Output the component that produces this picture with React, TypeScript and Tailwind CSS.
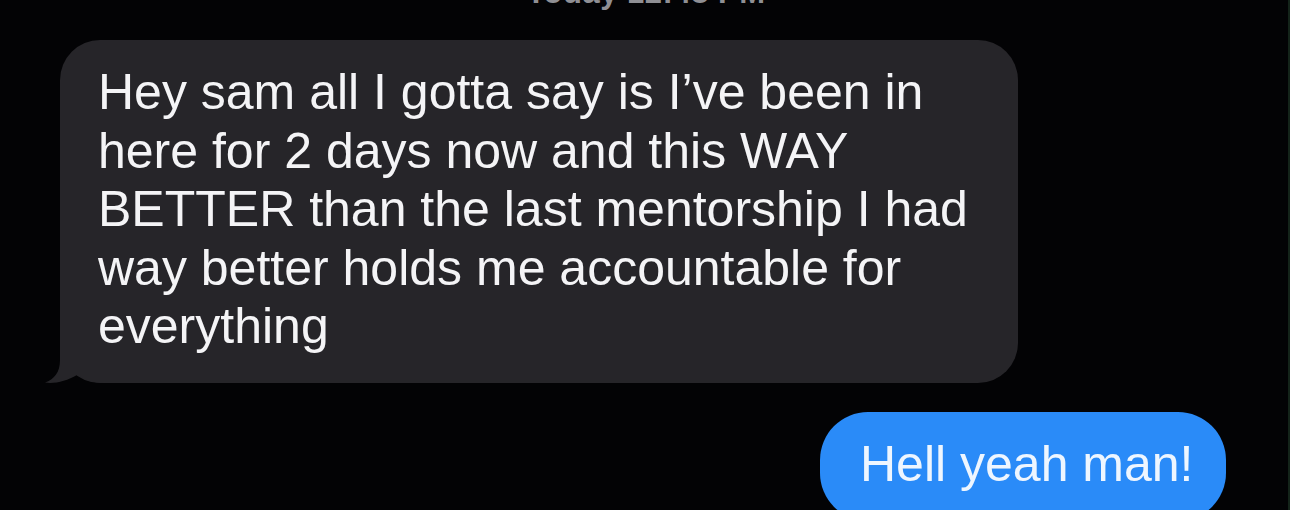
import React from "react";

export default function App() {
  const lines = [
    "Hey sam all I gotta say is I\u2019ve been in",
    "here for 2 days now and this WAY",
    "BETTER than the last mentorship I had",
    "way better holds me accountable for",
    "everything",
  ];
  return (
    <div
      className="w-[1290px] h-[510px] overflow-hidden bg-[#030305] flex flex-col border-r-2 border-[#14241a]"
      style={{ fontFamily: '"Liberation Sans", Arial, sans-serif' }}
    >
      <div className="-mt-[22px] h-[30px] leading-[30px] text-[31px] font-semibold text-[#8f8f94] text-center pl-[4px] tracking-[0.5px]">
        Today 12:48 PM
      </div>
      <div className="relative ml-[60px] mt-[32px] w-[958px] rounded-[40px] bg-[#262529] pl-[38px] pt-[23px] pb-[27px] text-[50px] leading-[58.5px] text-[#f4f4f6]">
        {lines.map((l, i) => (
          <div key={i} className="whitespace-nowrap">
            {l}
          </div>
        ))}
        <svg
          className="absolute left-[-15px] bottom-0"
          width="60"
          height="40"
          viewBox="0 0 60 40"
        >
          <path
            d="M15 0 L15 17 C15 30 9 36 0 39.6 C10 41 22 38 32 32 C40 37 48 40 60 40 L60 0 Z"
            fill="#262529"
          />
        </svg>
      </div>
      <div className="self-end mr-[62px] mt-[29.5px] w-[406px] rounded-[48px] bg-[#2a8bf8] pl-[40px] pt-[23px] pb-[27px] text-[50px] leading-[58.5px] text-[#eef6ff] whitespace-nowrap">
        Hell yeah man!
      </div>
    </div>
  );
}
